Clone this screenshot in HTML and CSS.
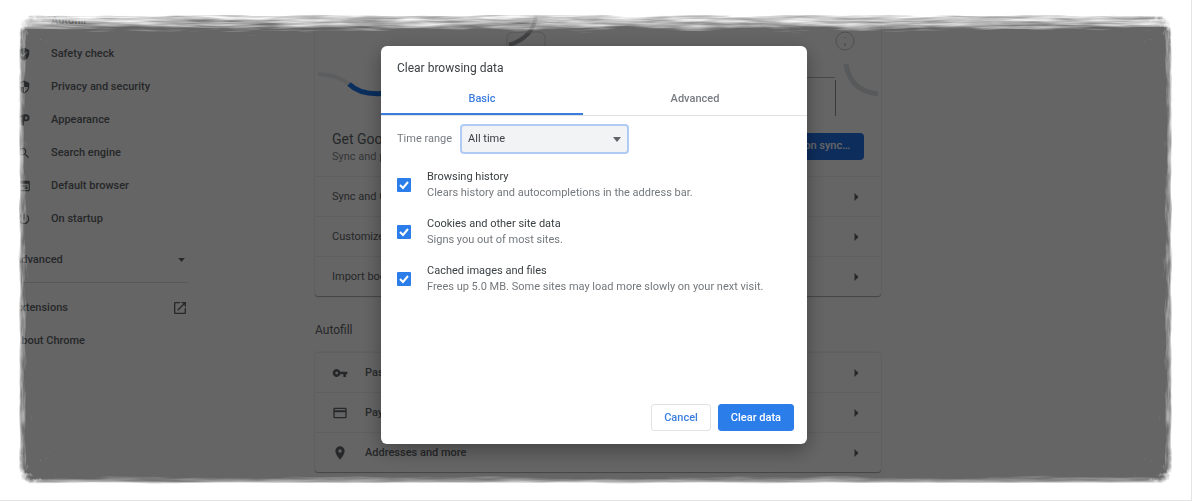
FILE: index.html
```html
<!DOCTYPE html>
<html lang="en">
<head>
<meta charset="utf-8">
<title>Settings - Clear browsing data</title>
<link rel="stylesheet" href="styles.css">
</head>
<body>
<div class="page">
  <nav class="sidebar" aria-label="Settings">
    <a class="nav-item" href="#autofill"><svg class="nav-icon" viewBox="0 0 24 24"></svg>Autofill</a>
    <a class="nav-item" href="#safety"><svg class="nav-icon" viewBox="0 0 24 24"><path d="M12 1 3 5v6c0 5.500 3.800 10.700 9 12 5.200-1.300 9-6.500 9-12V5l-9-4zm-2 16-4-4 1.400-1.400L10 14.200l6.600-6.600L18 9l-8 8z"/></svg>Safety check</a>
    <a class="nav-item" href="#privacy"><svg class="nav-icon" viewBox="0 0 24 24"><path d="M12 1 3 5v6c0 5.500 3.800 10.700 9 12 5.200-1.300 9-6.500 9-12V5l-9-4zm0 11h7c-.5 4.100-3.300 7.800-7 8.900V12H5V6.300l7-3.100V12z"/></svg>Privacy and security</a>
    <a class="nav-item" href="#appearance"><svg class="nav-icon" viewBox="0 0 24 24"><path d="M12 2a10 10 0 0 0-2 19.800c1 .2 2-.6 2-1.600V14h3.500a6 6 0 0 0 0-12H12zm2 4h1.500a2 2 0 0 1 0 5H14V6zM7 8a1.500 1.500 0 1 1 0 3 1.500 1.500 0 0 1 0-3z"/></svg>Appearance</a>
    <a class="nav-item" href="#search"><svg class="nav-icon" viewBox="0 0 24 24"><path d="M15.500 14h-.8l-.3-.3A6.500 6.500 0 1 0 13.700 14.400l.3.300v.8l5 5 1.500-1.500-5-5zm-6 0a4.500 4.500 0 1 1 0-9 4.500 4.500 0 0 1 0 9z"/></svg>Search engine</a>
    <a class="nav-item" href="#browser"><svg class="nav-icon" viewBox="0 0 24 24"><path d="M20 3H4a2 2 0 0 0-2 2v14a2 2 0 0 0 2 2h16a2 2 0 0 0 2-2V5a2 2 0 0 0-2-2zm0 16H4V8h16v11zM6 13h12v-2H6v2zm7 4h5v-3h-5v3z"/></svg>Default browser</a>
    <a class="nav-item" href="#startup"><svg class="nav-icon" viewBox="0 0 24 24"><path d="M13 3h-2v10h2V3zm4.800 2.200-1.400 1.400A7 7 0 1 1 7.600 6.600L6.200 5.200a9 9 0 1 0 11.600 0z"/></svg>On startup</a>
    <button class="nav-more" type="button">Advanced<svg class="caret" viewBox="0 0 10 6"><path d="M0 0h10L5 6z"/></svg></button>
    <hr class="nav-rule">
    <a class="nav-plain" href="#extensions">Extensions<svg class="launch" viewBox="0 0 24 24"><path d="M19 19H5V5h7V3H5a2 2 0 0 0-2 2v14c0 1.100.9 2 2 2h14a2 2 0 0 0 2-2v-7h-2v7zM14 3v2h3.600l-9.800 9.800 1.400 1.400L19 6.400V10h2V3h-7z"/></svg></a>
    <a class="nav-plain" href="#about">About Chrome</a>
  </nav>

  <main class="content">
    <section class="card">
      <svg class="banner" viewBox="0 0 566 116" aria-hidden="true">
        <path d="M3 74q20 1 31 10" stroke="#e6e8ea" stroke-width="4"/>
        <path d="M34 84q14 14 46 8" stroke="#1a73e8" stroke-width="5"/>
        <path d="M221 15q-2 22-27 30" stroke="#a0a2a5" stroke-width="4"/>
        <rect x="192" y="32" width="38" height="40" rx="6" stroke="#d4d6d8"/>
        <path d="M480 77.500h40" stroke="#b4b6b8"/>
        <path d="M520.500 80v38" stroke="#8f9194"/>
        <circle cx="530" cy="41" r="9" stroke="#c4c6c9"/>
        <path d="M530 37v1m0 5v3" stroke="#d0d2d4" stroke-width="2"/>
        <path d="M531 64q4 27 32 30" stroke="#dcdee0" stroke-width="5"/>
      </svg>
      <div class="promo">
        <div>
          <h2 class="promo-title">Get Google smarts in Chrome</h2>
          <p class="promo-text">Sync and personalize Chrome across your devices</p>
        </div>
        <button class="sync" type="button">Turn on sync…</button>
      </div>
      <a class="row" href="#sync">Sync and Google services<svg class="chevron" viewBox="0 0 4 8"><path d="M0 0l4 4-4 4z"/></svg></a>
      <a class="row" href="#profile">Customize your Chrome profile<svg class="chevron" viewBox="0 0 4 8"><path d="M0 0l4 4-4 4z"/></svg></a>
      <a class="row" href="#import">Import bookmarks and settings<svg class="chevron" viewBox="0 0 4 8"><path d="M0 0l4 4-4 4z"/></svg></a>
    </section>

    <h2 class="heading" id="autofill">Autofill</h2>
    <section class="card">
      <a class="row strong" href="#passwords"><svg class="row-icon" viewBox="0 0 24 24"><path d="M12.600 10a6 6 0 1 0 0 4H17v4h4v-4h2v-4H12.600zM7 14a2 2 0 1 1 0-4 2 2 0 0 1 0 4z"/></svg>Passwords<svg class="chevron" viewBox="0 0 4 8"><path d="M0 0l4 4-4 4z"/></svg></a>
      <a class="row strong" href="#payments"><svg class="row-icon" viewBox="0 0 24 24"><path d="M20 4H4a2 2 0 0 0-2 2v12c0 1.100.9 2 2 2h16a2 2 0 0 0 2-2V6a2 2 0 0 0-2-2zm0 14H4v-7h16v7zm0-10H4V6h16v2z"/></svg>Payment methods<svg class="chevron" viewBox="0 0 4 8"><path d="M0 0l4 4-4 4z"/></svg></a>
      <a class="row strong" href="#addresses"><svg class="row-icon" viewBox="0 0 24 24"><path d="M12 2a7 7 0 0 0-7 7c0 5.200 7 13 7 13s7-7.800 7-13a7 7 0 0 0-7-7zm0 9.500a2.500 2.500 0 1 1 0-5 2.500 2.500 0 0 1 0 5z"/></svg>Addresses and more<svg class="chevron" viewBox="0 0 4 8"><path d="M0 0l4 4-4 4z"/></svg></a>
    </section>
  </main>
</div>

<div class="backdrop">
  <form class="dialog" role="dialog" aria-labelledby="dialog-title">
    <h1 class="dialog-title" id="dialog-title">Clear browsing data</h1>
    <div class="tabs" role="tablist">
      <button class="tab tab-basic" type="button" role="tab" aria-selected="true">Basic</button>
      <button class="tab tab-advanced" type="button" role="tab" aria-selected="false">Advanced</button>
    </div>
    <div class="dialog-body">
      <div class="range">
        <label for="range">Time range</label>
        <div class="select-box">
          <select id="range" class="select"><option>All time</option></select>
          <svg class="select-arrow" viewBox="0 0 10 6"><path d="M0 0h10L5 6z"/></svg>
        </div>
      </div>
      <label class="option">
        <span class="check"><input type="checkbox" checked><svg viewBox="0 0 14 14"><path d="M3 7l3 3 5-6"/></svg></span>
        <span class="option-text"><span class="option-name">Browsing history</span><span class="option-note">Clears history and autocompletions in the address bar.</span></span>
      </label>
      <label class="option">
        <span class="check"><input type="checkbox" checked><svg viewBox="0 0 14 14"><path d="M3 7l3 3 5-6"/></svg></span>
        <span class="option-text"><span class="option-name">Cookies and other site data</span><span class="option-note">Signs you out of most sites.</span></span>
      </label>
      <label class="option">
        <span class="check"><input type="checkbox" checked><svg viewBox="0 0 14 14"><path d="M3 7l3 3 5-6"/></svg></span>
        <span class="option-text"><span class="option-name">Cached images and files</span><span class="option-note">Frees up 5.0 MB. Some sites may load more slowly on your next visit.</span></span>
      </label>
    </div>
    <div class="actions">
      <button class="button" type="button">Cancel</button>
      <button class="button primary" type="button">Clear data</button>
    </div>
  </form>
</div>

<div class="frame" aria-hidden="true">
  <svg class="edge edge-top">
    <defs>
      <linearGradient id="fade-top" x1="0" y1="0" x2="0" y2="1"><stop offset=".38" stop-color="#fff"/><stop offset=".44" stop-color="#fff" stop-opacity=".5"/><stop offset=".72" stop-color="#fff" stop-opacity=".34"/><stop offset=".9" stop-color="#fff" stop-opacity="0"/></linearGradient>
      <filter id="brush-top" x="0" y="0" width="1" height="1" color-interpolation-filters="sRGB">
        <feTurbulence type="fractalNoise" baseFrequency=".018 .3" numOctaves="3" seed="4" result="n"/>
        <feComposite in="SourceGraphic" in2="n" operator="arithmetic" k2="1.500" k3=".9" k4="-.45"/>
        <feColorMatrix values="0 0 0 0 1  0 0 0 0 1  0 0 0 0 1  0 0 0 1.400 -.3"/>
      </filter>
    </defs>
    <rect width="100%" height="100%" fill="url(#fade-top)" filter="url(#brush-top)"/>
  </svg>
  <svg class="edge edge-bottom">
    <defs>
      <linearGradient id="fade-bottom" x1="0" y1="1" x2="0" y2="0"><stop offset=".44" stop-color="#fff"/><stop offset=".58" stop-color="#fff" stop-opacity=".34"/><stop offset=".8" stop-color="#fff" stop-opacity="0"/></linearGradient>
      <filter id="brush-bottom" x="0" y="0" width="1" height="1" color-interpolation-filters="sRGB">
        <feTurbulence type="fractalNoise" baseFrequency=".015 .25" numOctaves="3" seed="9" result="n"/>
        <feComposite in="SourceGraphic" in2="n" operator="arithmetic" k2="1.500" k3=".5" k4="-.25"/>
        <feColorMatrix values="0 0 0 0 1  0 0 0 0 1  0 0 0 0 1  0 0 0 1.400 -.3"/>
      </filter>
    </defs>
    <rect width="100%" height="100%" fill="url(#fade-bottom)" filter="url(#brush-bottom)"/>
  </svg>
  <svg class="edge edge-left">
    <defs>
      <linearGradient id="fade-side" x1="0" y1="0" x2="1" y2="0"><stop offset=".48" stop-color="#fff"/><stop offset=".62" stop-color="#fff" stop-opacity=".34"/><stop offset=".85" stop-color="#fff" stop-opacity="0"/></linearGradient>
      <filter id="brush-side" x="0" y="0" width="1" height="1" color-interpolation-filters="sRGB">
        <feTurbulence type="fractalNoise" baseFrequency=".3 .04" numOctaves="3" seed="6" result="n"/>
        <feComposite in="SourceGraphic" in2="n" operator="arithmetic" k2="1.500" k3=".6" k4="-.3"/>
        <feColorMatrix values="0 0 0 0 1  0 0 0 0 1  0 0 0 0 1  0 0 0 1.400 -.3"/>
      </filter>
    </defs>
    <rect width="100%" height="100%" fill="url(#fade-side)" filter="url(#brush-side)"/>
  </svg>
  <svg class="edge edge-right"><rect width="100%" height="100%" fill="url(#fade-side)" filter="url(#brush-side)"/></svg>
  <svg class="corner corner-tl" viewBox="0 0 50 50">
    <defs>
      <radialGradient id="fade-corner" cx="1" cy="1" r="1.250"><stop offset=".7" stop-color="#fff" stop-opacity="0"/><stop offset=".88" stop-color="#fff" stop-opacity=".4"/><stop offset="1" stop-color="#fff"/></radialGradient>
      <filter id="spatter" x="0" y="0" width="1" height="1" color-interpolation-filters="sRGB">
        <feTurbulence type="fractalNoise" baseFrequency=".16" numOctaves="4" seed="3" result="n"/>
        <feComposite in="SourceGraphic" in2="n" operator="arithmetic" k2="1.200" k3="1" k4="-.5"/>
        <feColorMatrix values="0 0 0 0 1  0 0 0 0 1  0 0 0 0 1  0 0 0 1.600 -.4"/>
      </filter>
    </defs>
    <rect width="50" height="50" fill="url(#fade-corner)" filter="url(#spatter)"/>
  </svg>
  <svg class="corner corner-tr" viewBox="0 0 50 50"><rect width="50" height="50" fill="url(#fade-corner)" filter="url(#spatter)"/></svg>
  <svg class="corner corner-bl" viewBox="0 0 50 50"><rect width="50" height="50" fill="url(#fade-corner)" filter="url(#spatter)"/></svg>
  <svg class="corner corner-br" viewBox="0 0 50 50"><rect width="50" height="50" fill="url(#fade-corner)" filter="url(#spatter)"/></svg>
</div>
</body>
</html>
```
FILE: styles.css
```css
* { box-sizing: border-box; }

body {
  margin: 0;
  height: 100vh;
  overflow: hidden;
  background: #fcfcfc;
  color: #606468;
  font: 11px/16px Roboto, "Liberation Sans", sans-serif;
}

h1, h2, p { margin: 0; font-weight: 400; }
a { color: inherit; text-decoration: none; }
button, select { font: inherit; color: inherit; }
svg { fill: currentColor; flex: none; }

.page {
  display: grid;
  grid-template-columns: 1fr minmax(0, 566px) 1fr;
  padding-left: 4px;
}

.sidebar {
  width: 184px;
  padding: 4px 0 0 10px;
  font-weight: 500;
}

.nav-item, .nav-plain, .nav-more {
  display: flex;
  align-items: center;
  height: 33px;
}

.nav-item { gap: 20px; padding-left: 3px; }
.nav-icon { width: 14px; height: 14px; }
.nav-plain, .nav-more { justify-content: space-between; }

.nav-more {
  width: 100%;
  margin-top: 8px;
  padding: 0;
  border: 0;
  background: none;
  font-weight: 500;
}

.caret { width: 7px; height: 4px; margin-right: 3px; }
.launch { width: 16px; height: 16px; }

.nav-rule {
  margin: 6px 0 8px;
  border: 0;
  border-top: 1px solid #dadce0;
}

.card {
  border-radius: 3px;
  background: #fcfcfc;
  box-shadow: 0 1px 1px #a8abae, 0 0 1px #b8bbbe;
}

.banner { display: block; width: 100%; height: auto; fill: none; }

.promo {
  display: flex;
  justify-content: space-between;
  align-items: center;
  height: 60px;
  padding: 0 17px;
}

.promo-title { margin-top: 1px; font-size: 14px; line-height: 20px; }
.promo-text { color: #85888c; }

.sync {
  height: 27px;
  padding: 0 14px;
  border: 0;
  border-radius: 4px;
  background: #2272e6;
  color: #fff;
  font-weight: 500;
}

.row {
  display: flex;
  align-items: center;
  height: 40px;
  padding: 0 22px 0 17px;
  border-top: 1px solid #eceef0;
}

.row.strong { font-weight: 500; }
.row-icon { width: 16px; height: 16px; margin-right: 17px; }
.chevron { width: 5px; height: 8px; margin-left: auto; }
.heading { padding: 26px 0 13px; font-size: 12px; line-height: 17px; }

.backdrop {
  position: fixed;
  inset: 0;
  display: flex;
  justify-content: center;
  padding: 46px 4px 57px 0;
  background: rgba(0, 0, 0, .6);
}

.dialog {
  display: flex;
  flex-direction: column;
  width: 100%;
  max-width: 426px;
  border-radius: 6px;
  background: #fff;
  box-shadow: 0 6px 20px rgba(0, 0, 0, .35);
}

.dialog-title {
  padding: 14px 16px 6px;
  color: #3c4043;
  font-size: 12px;
  line-height: 16px;
}

.tabs { display: flex; border-bottom: 1px solid #e0e2e5; }

.tab {
  height: 33px;
  padding: 0;
  border: 0;
  background: none;
  color: #777b80;
  font-weight: 500;
}

.tab-basic {
  flex: 202;
  border-bottom: 2px solid #3b7ddd;
  padding-top: 2px;
  color: #3b7ddd;
}

.tab-advanced { flex: 224; }

.dialog-body {
  display: flex;
  flex: 1;
  flex-direction: column;
  gap: 15px;
  padding: 8px 16px;
}

.range {
  display: flex;
  align-items: center;
  gap: 8px;
  color: #777b80;
}

.select-box { position: relative; }

.select {
  width: 169px;
  height: 30px;
  padding: 0 6px;
  border: 2px solid #afcbf3;
  border-radius: 4px;
  background: #f1f3f4;
  color: #3c4043;
  appearance: none;
}

.select-arrow {
  position: absolute;
  top: 13px;
  right: 8px;
  width: 8px;
  height: 5px;
  color: #5f6368;
  pointer-events: none;
}

.option { display: flex; align-items: center; gap: 16px; }
.check { position: relative; width: 14px; height: 14px; }

.check input {
  display: block;
  width: 14px;
  height: 14px;
  margin: 0;
  border-radius: 1px;
  background: #2b7de9;
  appearance: none;
}

.check svg {
  position: absolute;
  inset: 0;
  fill: none;
  stroke: #fff;
  stroke-width: 2;
  pointer-events: none;
}

.option-text { display: flex; flex-direction: column; }
.option-name { color: #3c4043; }
.option-note { color: #74787c; }

.actions {
  display: flex;
  justify-content: flex-end;
  gap: 7px;
  padding: 13px;
}

.button {
  height: 27px;
  padding: 0 12px;
  border: 1px solid #e0e2e5;
  border-radius: 3px;
  background: #fff;
  color: #3b7ddd;
  font-weight: 500;
}

.primary { border-color: #2b7de9; background: #2b7de9; color: #fff; }

.frame {
  position: fixed;
  inset: 0;
  border: solid #e4e4e4;
  border-width: 0 1px 1px 0;
  pointer-events: none;
}

.edge, .corner { position: absolute; }
.edge-top { top: 0; left: 0; width: 100%; height: 36px; }
.edge-bottom { bottom: 0; left: 0; width: 100%; height: 32px; }
.edge-left { top: 0; left: 0; width: 34px; height: 100%; }
.edge-right { top: 0; right: 0; width: 34px; height: 100%; transform: scaleX(-1); }
.corner { width: 50px; height: 50px; }
.corner-tl { top: 12px; left: 15px; }
.corner-tr { top: 12px; right: 15px; transform: scaleX(-1); }
.corner-bl { bottom: 12px; left: 15px; transform: scaleY(-1); }
.corner-br { bottom: 12px; right: 15px; transform: scale(-1); }
```
